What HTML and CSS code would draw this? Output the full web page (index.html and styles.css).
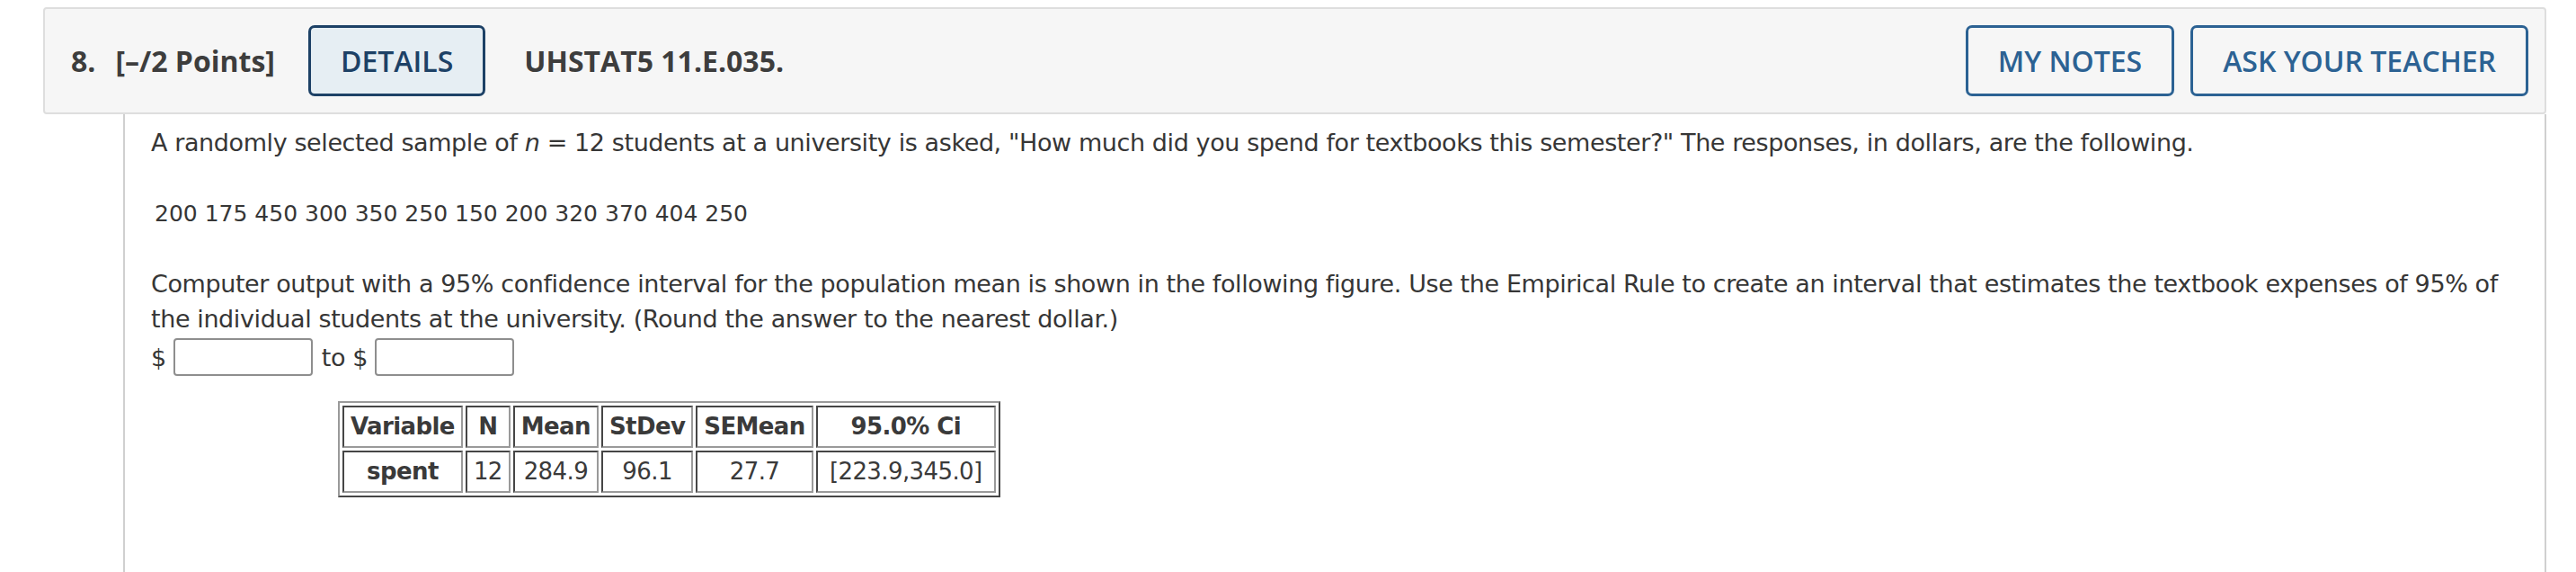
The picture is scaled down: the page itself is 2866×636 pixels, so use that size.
FILE: index.html
```html
<!DOCTYPE html>
<html lang="en">
<head>
<meta charset="utf-8">
<title>Question 8</title>
<link rel="stylesheet" href="styles.css">
</head>
<body>
<div class="question">
  <div class="q-header">
    <div class="q-title">
      <span class="q-num">8.</span>
      <span class="q-points">[–/2 Points]</span>
    </div>
    <button class="btn btn-details">DETAILS</button>
    <span class="q-code">UHSTAT5 11.E.035.</span>
    <div class="q-actions">
      <button class="btn btn-outline">MY NOTES</button>
      <button class="btn btn-outline">ASK YOUR TEACHER</button>
    </div>
  </div>
  <div class="q-body">
    <p class="para p1">A randomly selected sample of <i>n</i> = 12 students at a university is asked, "How much did you spend for textbooks this semester?" The responses, in dollars, are the following.</p>
    <p class="para data">200 175 450 300 350 250 150 200 320 370 404 250</p>
    <p class="para p3">Computer output with a 95% confidence interval for the population mean is shown in the following figure. Use the Empirical Rule to create an interval that estimates the textbook expenses of 95% of the individual students at the university. (Round the answer to the nearest dollar.)<br>
      <span class="answer">$ <input class="ans" type="text"> to $ <input class="ans" type="text"></span>
    </p>
    <div class="table-wrap">
      <table class="stats">
        <tr>
          <th>Variable</th><th>N</th><th>Mean</th><th>StDev</th><th>SEMean</th><th class="ci">95.0% Ci</th>
        </tr>
        <tr>
          <th>spent</th><td>12</td><td>284.9</td><td>96.1</td><td>27.7</td><td>[223.9,345.0]</td>
        </tr>
      </table>
    </div>
  </div>
</div>
</body>
</html>
```
FILE: styles.css
```css
html, body {
  margin: 0;
  padding: 0;
  background: #ffffff;
}

body {
  font-family: "DejaVu Sans", Verdana, sans-serif;
  color: #363636;
}

.question {
  margin: 8px 0 0 48px;
  width: 2785px;
}

.q-header {
  display: flex;
  align-items: center;
  background: #f6f6f6;
  border: 2px solid #dedede;
  border-radius: 4px;
  padding: 18px 18px 18px 29px;
  font-family: "Open Sans", sans-serif;
  font-weight: 700;
  font-size: 32px;
  color: #3d3d3d;
}

.q-title {
  display: flex;
  gap: 22px;
  margin-right: 37px;
}

.btn {
  font-family: "Open Sans", sans-serif;
  font-weight: 600;
  font-size: 32px;
  height: 79px;
  border-radius: 7px;
  border: 3px solid #2c6293;
  background: transparent;
  color: #2c6293;
  padding: 0 33px;
  cursor: pointer;
}

.btn-details {
  background: #e6eef3;
  border-color: #1d4166;
  color: #1d4166;
}

.q-code {
  margin-left: 43px;
}

.q-actions {
  margin-left: auto;
  display: flex;
  gap: 18px;
}

.q-body {
  margin-left: 89px;
  border-left: 2px solid #d0d0d0;
  border-right: 2px solid #d0d0d0;
  padding: 12px 30px 90px 29px;
}

.para {
  margin: 0;
  font-size: 27px;
  letter-spacing: -0.4px;
  line-height: 39px;
}

.p1 {
  margin-bottom: 40px;
}

.data {
  font-size: 25px;
  letter-spacing: 0;
  padding-left: 4px;
  margin-bottom: 39px;
}

.answer {
  display: inline-flex;
  align-items: center;
  margin-top: 2px;
}

.ans {
  width: 155px;
  height: 42px;
  box-sizing: border-box;
  border: 2px solid #8e8e8e;
  border-radius: 4px;
  margin: 0 10px 0 8px;
  padding: 0;
  background: #fff;
}

.table-wrap {
  margin: 28px 0 0 208px;
}

.stats {
  border: 2px outset #9a9a9a;
  border-spacing: 3px;
  font-size: 26px;
  letter-spacing: -0.6px;
  color: #3a3a3a;
}

.stats th,
.stats td {
  border: 2px inset #9a9a9a;
  padding: 6px 7px;
  text-align: center;
  line-height: 31px;
  white-space: nowrap;
}

.stats td {
  font-weight: 400;
}

.stats .ci {
  width: 182px;
}
```
